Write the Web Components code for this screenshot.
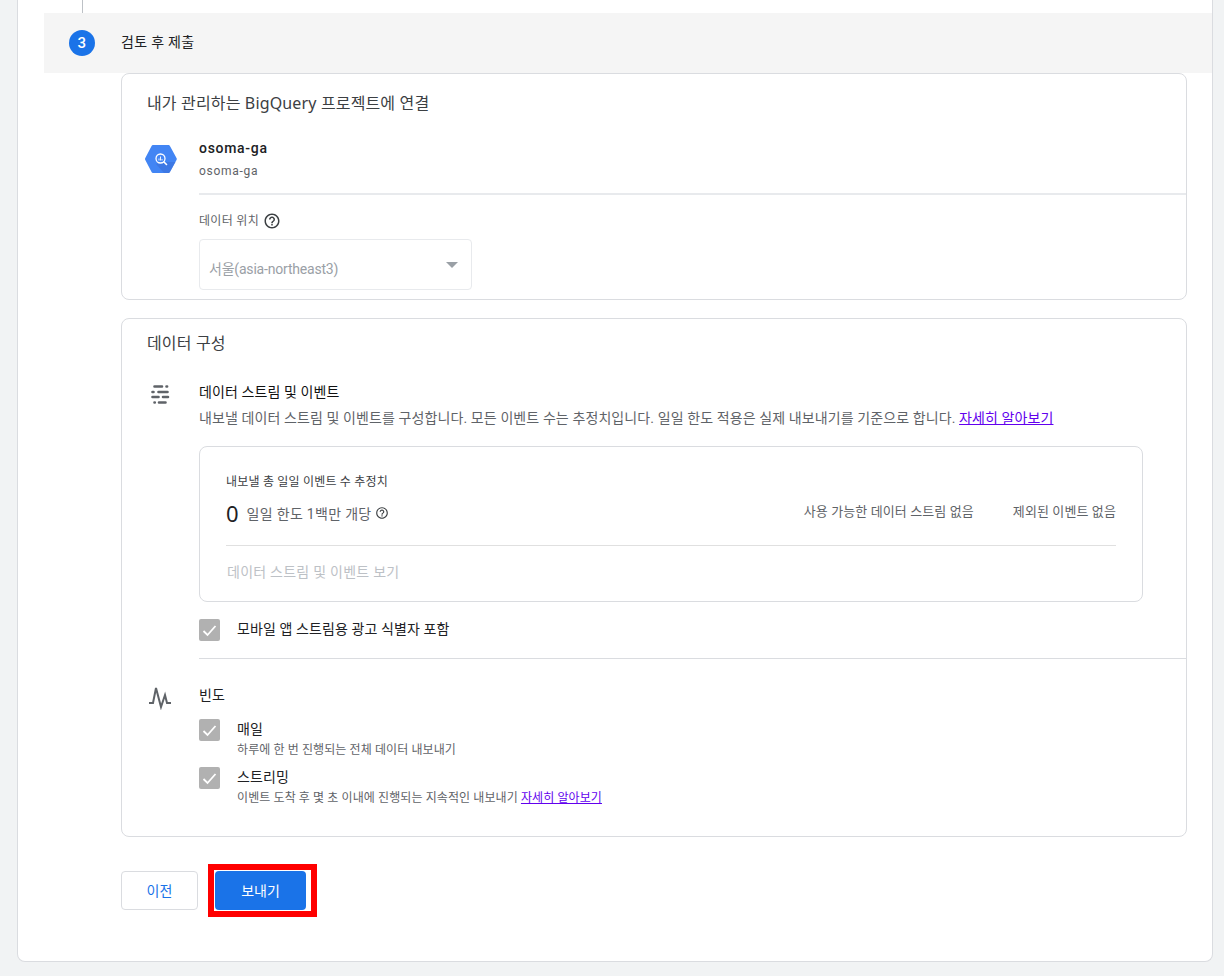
<!DOCTYPE html>
<html lang="ko">
<head>
<meta charset="utf-8">
<title>BigQuery 연결</title>
<style>
  html, body { margin: 0; height: 976px; overflow: hidden; background: #f1f3f4; }
  body { font-family: Roboto, "Noto Sans CJK KR", sans-serif; color: #202124; }
  a { color: #6200ee; }
</style>
</head>
<body>

<ga-panel>
  <ga-step number="3"><span>검토 후 제출</span></ga-step>

  <ga-card heading="내가 관리하는 BigQuery 프로젝트에 연결">
    <ga-project name="osoma-ga" sub="osoma-ga"></ga-project>
    <ga-location label="데이터 위치" value="서울(asia-northeast3)"></ga-location>
  </ga-card>

  <ga-card class="second" heading="데이터 구성">
    <ga-streams></ga-streams>
    <ga-frequency></ga-frequency>
  </ga-card>

  <ga-actions></ga-actions>
</ga-panel>

<script>
const HELP_ICON = (size) => `
  <svg width="${size}" height="${size}" viewBox="0 0 24 24" aria-hidden="true">
    <path fill="#3c4043" d="M11 18h2v-2h-2v2zm1-16C6.48 2 2 6.48 2 12s4.48 10 10 10 10-4.48 10-10S17.52 2 12 2zm0 18c-4.41 0-8-3.59-8-8s3.59-8 8-8 8 3.59 8 8-3.59 8-8 8zm0-14c-2.21 0-4 1.79-4 4h2c0-1.1.9-2 2-2s2 .9 2 2c0 2-3 1.75-3 5h2c0-2.25 3-2.5 3-5 0-2.21-1.79-4-4-4z"/>
  </svg>`;

class GaPanel extends HTMLElement {
    connectedCallback() {
        this.attachShadow({ mode: 'open' });
        this.shadowRoot.innerHTML = `
            <style>
                :host {
                    display: block;
                    box-sizing: border-box;
                    width: 1196px;
                    height: 962px;
                    margin-left: 17px;
                    padding-top: 13px;
                    background: #fff;
                    border: 1px solid #dadce0;
                    border-top: none;
                    border-radius: 0 0 8px 8px;
                    position: relative;
                }
                .line {
                    position: absolute;
                    left: 64px;
                    top: 0;
                    width: 1px;
                    height: 30px;
                    background: #bdc1c6;
                }
            </style>
            <div class="line"></div>
            <slot></slot>
        `;
    }
}

class GaStep extends HTMLElement {
    connectedCallback() {
        this.attachShadow({ mode: 'open' });
        this.shadowRoot.innerHTML = `
            <style>
                :host {
                    display: flex;
                    align-items: center;
                    box-sizing: border-box;
                    height: 60px;
                    margin-left: 26px;
                    padding: 0 0 1px 25px;
                    background: #f5f5f5;
                    font-size: 14px;
                    letter-spacing: .3px;
                    position: relative;
                }
                .num {
                    width: 26px;
                    height: 26px;
                    border-radius: 50%;
                    background: #1a73e8;
                    color: #fff;
                    font-size: 15px;
                    font-weight: 500;
                    display: flex;
                    align-items: center;
                    justify-content: center;
                    margin-right: 26px;
                }
                ::slotted(span) { margin-top: -4px; }
            </style>
            <span class="num">${this.getAttribute('number')}</span>
            <slot></slot>
        `;
    }
}

class GaCard extends HTMLElement {
    connectedCallback() {
        this.attachShadow({ mode: 'open' });
        this.shadowRoot.innerHTML = `
            <style>
                :host {
                    display: block;
                    box-sizing: border-box;
                    width: 1066px;
                    margin-left: 103px;
                    background: #fff;
                    border: 1px solid #dadce0;
                    border-radius: 8px;
                }
                :host(.second) { margin-top: 18px; }
                h2 {
                    margin: 0;
                    padding: 17px 0 0 25px;
                    font: 400 16px/24px "Noto Sans", "Noto Sans CJK KR", sans-serif;
                    letter-spacing: .15px;
                    color: #3c4043;
                }
                :host(.second) h2 { padding-top: 12px; }
            </style>
            <h2>${this.getAttribute('heading')}</h2>
            <slot></slot>
        `;
    }
}

class GaProject extends HTMLElement {
    connectedCallback() {
        this.attachShadow({ mode: 'open' });
        this.shadowRoot.innerHTML = `
            <style>
                :host {
                    display: flex;
                    padding: 23px 0 0 23px;
                }
                svg { flex: none; margin: 7px 22px 0 0; }
                .text { flex: 1; border-bottom: 2px solid #e8eaed; height: 55px; }
                .name { font-size: 14px; font-weight: 500; line-height: 20px; letter-spacing: .7px; }
                .sub { font-size: 12px; line-height: 16px; margin-top: 5px; color: #5f6368; letter-spacing: .7px; }
            </style>
            <svg width="32" height="28" viewBox="0 0 32 28" aria-hidden="true">
                <path fill="#4285f4" d="M8 0h15.500a1.500 1.500 0 0 1 1.300.7L31.500 13a2 2 0 0 1 0 2L24.800 27.300a1.500 1.500 0 0 1-1.300.7H8a1.500 1.500 0 0 1-1.300-.7L.3 15a2 2 0 0 1 0-2L6.700.7A1.500 1.500 0 0 1 8 0z"/>
                <path fill="#3a6fd8" d="M20 17l10.500 0-5.700 10.300a1.500 1.500 0 0 1-1.300.7H19l-8-9z" opacity=".6"/>
                <circle cx="15.500" cy="13.500" r="4.500" fill="none" stroke="#fff" stroke-width="1.300"/>
                <path stroke="#fff" stroke-width="1.600" stroke-linecap="round" d="M19 17l2.500 2.500"/>
                <path stroke="#fff" stroke-width=".9" d="M14 13.500v2M15.500 11.500v4M17 14v1.500"/>
            </svg>
            <div class="text">
                <div class="name">${this.getAttribute('name')}</div>
                <div class="sub">${this.getAttribute('sub')}</div>
            </div>
        `;
    }
}

class GaLocation extends HTMLElement {
    connectedCallback() {
        this.attachShadow({ mode: 'open' });
        this.shadowRoot.innerHTML = `
            <style>
                :host {
                    display: block;
                    padding: 13px 0 9px 77px;
                }
                .label {
                    display: flex;
                    align-items: center;
                    gap: 4px;
                    height: 22px;
                    font-size: 12px;
                    letter-spacing: .3px;
                    color: #5f6368;
                }
                .label svg { margin-top: 3px; }
                .select {
                    box-sizing: border-box;
                    display: flex;
                    align-items: center;
                    justify-content: space-between;
                    width: 273px;
                    height: 51px;
                    margin-top: 9px;
                    padding: 6px 13px 0 9px;
                    border: 1px solid #e8eaed;
                    border-radius: 4px;
                    font-size: 14px;
                    letter-spacing: -.2px;
                    color: #9aa0a6;
                }
                .arrow {
                    width: 0;
                    height: 0;
                    margin-top: -5px;
                    border-left: 6px solid transparent;
                    border-right: 6px solid transparent;
                    border-top: 6px solid #9aa0a6;
                }
            </style>
            <div class="label">${this.getAttribute('label')} ${HELP_ICON(18)}</div>
            <div class="select">
                <span>${this.getAttribute('value')}</span>
                <span class="arrow"></span>
            </div>
        `;
    }
}

class GaCheck extends HTMLElement {
    connectedCallback() {
        this.attachShadow({ mode: 'open' });
        this.shadowRoot.innerHTML = `
            <style>
                :host { display: flex; gap: 17px; }
                .box {
                    flex: none;
                    width: 21px;
                    height: 22px;
                    border-radius: 2px;
                    background: #b1b1b1;
                    display: flex;
                    align-items: center;
                    justify-content: center;
                }
                .label { font-size: 14px; line-height: 20px; letter-spacing: .1px; color: #202124; }
                ::slotted([slot=hint]) { display: block; font-size: 12px; line-height: 16px; margin-top: 3px; letter-spacing: .1px; color: #5f6368; }
            </style>
            <span class="box">
                <svg width="15" height="13" viewBox="0 0 15 13" aria-hidden="true">
                    <path d="M1.500 7l4 4 8-9" fill="none" stroke="#fff" stroke-width="1.800"/>
                </svg>
            </span>
            <div>
                <div class="label">${this.getAttribute('label')}</div>
                <slot name="hint"></slot>
            </div>
        `;
    }
}

class GaStreams extends HTMLElement {
    connectedCallback() {
        this.attachShadow({ mode: 'open' });
        this.shadowRoot.innerHTML = `
            <style>
                :host {
                    display: block;
                    position: relative;
                    padding: 27px 0 0 77px;
                    font-size: 14px;
                }
                svg.lead { position: absolute; left: 27px; top: 29px; }
                h3 { margin: 0; font-size: 14px; font-weight: 400; line-height: 20px; letter-spacing: .1px; color: #111; }
                p { margin: 6px 0 0; line-height: 20px; letter-spacing: .1px; color: #5f6368; }
                a { color: #6200ee; }
                .box {
                    box-sizing: border-box;
                    width: 944px;
                    height: 156px;
                    margin-top: 18px;
                    padding: 27px 26px 0;
                    border: 1px solid #dadce0;
                    border-radius: 8px;
                }
                .cap { font-size: 12px; line-height: 16px; letter-spacing: .2px; color: #3c4043; }
                .stats {
                    display: flex;
                    align-items: center;
                    height: 32px;
                    margin-top: 7px;
                    padding-bottom: 16px;
                    border-bottom: 1px solid #e0e0e0;
                }
                .zero { font: 400 22px/32px "Noto Sans", sans-serif; margin-right: 8px; }
                .rate { display: flex; align-items: center; gap: 3px; font-size: 14px; letter-spacing: .3px; color: #5f6368; }
                .right { margin-left: auto; display: flex; gap: 39px; font-size: 13px; letter-spacing: .1px; color: #5f6368; margin-top: -6px; }
                .view { margin: 16px 0 0 1px; line-height: 20px; letter-spacing: .25px; color: #bdc1c6; }
                .include { margin-top: 17px; padding-bottom: 17px; border-bottom: 1px solid #dadce0; }
            </style>
            <svg class="lead" width="22" height="22" viewBox="0 0 22 22" aria-hidden="true">
                <path fill="none" stroke="#5f6368" stroke-width="2.600" stroke-linecap="round"
                    d="M5.500 2.500h7.500M17.500 2.500h.6M3.500 8h1M9.500 8h9M3.500 13h6M14 13h5M5.500 18.500h.3M10 18.500h6.500"/>
            </svg>
            <h3>데이터 스트림 및 이벤트</h3>
            <p>내보낼 데이터 스트림 및 이벤트를 구성합니다. 모든 이벤트 수는 추정치입니다. 일일 한도 적용은 실제 내보내기를 기준으로 합니다. <a href="#learn">자세히 알아보기</a></p>
            <div class="box">
                <div class="cap">내보낼 총 일일 이벤트 수 추정치</div>
                <div class="stats">
                    <span class="zero">0</span>
                    <span class="rate">일일 한도 1백만 개당 ${HELP_ICON(14)}</span>
                    <span class="right"><span>사용 가능한 데이터 스트림 없음</span><span>제외된 이벤트 없음</span></span>
                </div>
                <div class="view">데이터 스트림 및 이벤트 보기</div>
            </div>
            <ga-check class="include" label="모바일 앱 스트림용 광고 식별자 포함"></ga-check>
        `;
    }
}

class GaFrequency extends HTMLElement {
    connectedCallback() {
        this.attachShadow({ mode: 'open' });
        this.shadowRoot.innerHTML = `
            <style>
                :host {
                    display: block;
                    position: relative;
                    padding: 26px 0 30px 77px;
                }
                svg.lead { position: absolute; left: 27px; top: 25px; }
                h3 { margin: 0 0 14px; font-size: 14px; font-weight: 400; line-height: 20px; letter-spacing: .1px; color: #202124; }
                ga-check + ga-check { margin-top: 9px; }
                a { color: #6200ee; }
            </style>
            <svg class="lead" width="24" height="26" viewBox="0 0 24 26" aria-hidden="true">
                <path fill="none" stroke="#5f6368" stroke-width="2" d="M0 19h4l3-15 5 19 4-12 2 8h4"/>
            </svg>
            <h3>빈도</h3>
            <ga-check label="매일"><span slot="hint">하루에 한 번 진행되는 전체 데이터 내보내기</span></ga-check>
            <ga-check label="스트리밍"><span slot="hint">이벤트 도착 후 몇 초 이내에 진행되는 지속적인 내보내기 <a href="#learn">자세히 알아보기</a></span></ga-check>
        `;
    }
}

class GaActions extends HTMLElement {
    connectedCallback() {
        this.attachShadow({ mode: 'open' });
        this.shadowRoot.innerHTML = `
            <style>
                :host {
                    display: flex;
                    align-items: center;
                    gap: 10px;
                    margin: 27px 0 0 103px;
                }
                button {
                    box-sizing: border-box;
                    height: 39px;
                    border-radius: 4px;
                    font: 400 14px Roboto, "Noto Sans CJK KR", sans-serif;
                    padding: 0 0 2px;
                }
                .prev { width: 77px; background: #fff; color: #1a73e8; border: 1px solid #dadce0; }
                .send { width: 91px; background: #1a73e8; color: #fff; border: none; }
                .frame { padding: 1px 5px 1px 1px; border: 6px solid #f00; display: flex; }
            </style>
            <button class="prev">이전</button>
            <div class="frame"><button class="send">보내기</button></div>
        `;
    }
}

customElements.define('ga-panel', GaPanel);
customElements.define('ga-step', GaStep);
customElements.define('ga-card', GaCard);
customElements.define('ga-project', GaProject);
customElements.define('ga-location', GaLocation);
customElements.define('ga-check', GaCheck);
customElements.define('ga-streams', GaStreams);
customElements.define('ga-frequency', GaFrequency);
customElements.define('ga-actions', GaActions);
</script>
</body>
</html>
